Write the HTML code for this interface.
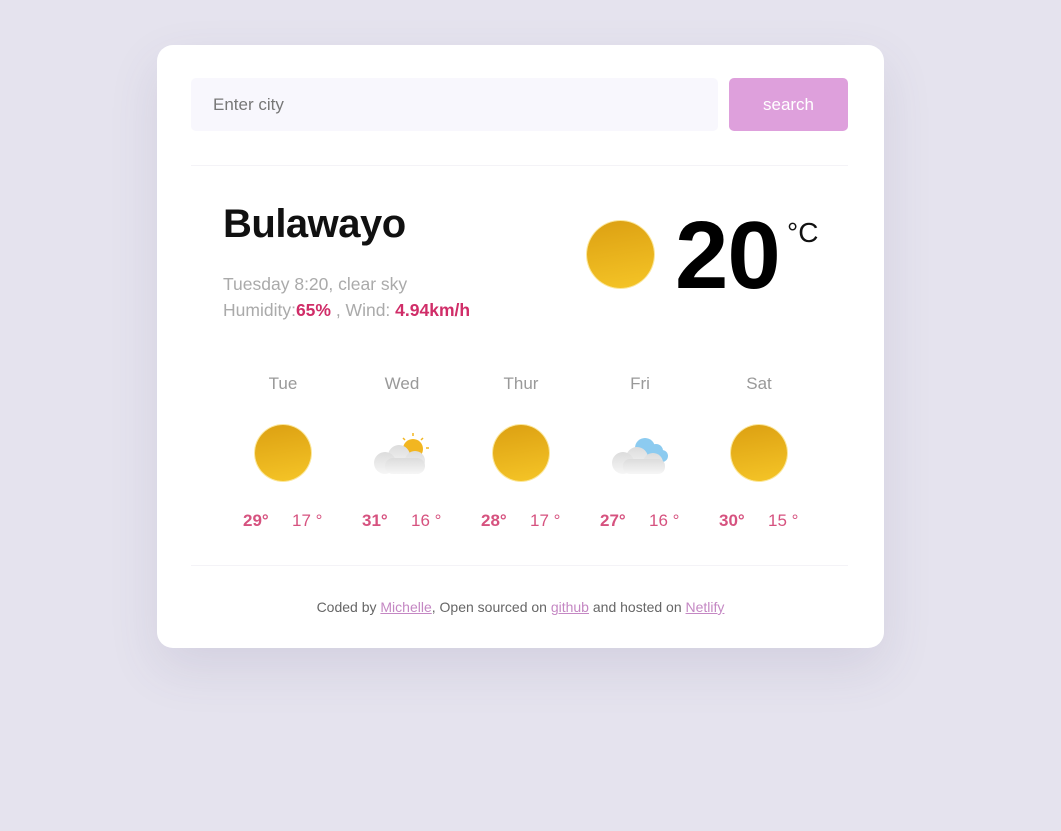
<!DOCTYPE html>
<html><head><style>
body{margin:0;background:#e5e3ee;font-family:"Liberation Sans",sans-serif;width:1061px;height:831px;position:relative;overflow:hidden}
.card{position:absolute;left:157px;top:45px;width:727px;height:603px;background:#fff;border-radius:16px;box-shadow:0 20px 50px rgba(80,70,120,.12)}
.a{position:absolute}
.inp{left:34px;top:33px;width:527px;height:53px;background:#f8f7fd;border-radius:5px;color:#777;font-size:17px;line-height:53px;box-sizing:border-box;padding-left:22px}
.btn{left:572px;top:33px;width:119px;height:53px;background:#dea0dc;border-radius:5px;color:#fff;font-size:17px;line-height:53px;text-align:center}
.hr{left:34px;width:657px;height:1px;background:#f4f3f7}
.sun{position:absolute;border-radius:50%;background:linear-gradient(170deg,#dca012,#f5c527);box-shadow:0 0 0 1px #fbe79a}
.day{position:absolute;width:120px;text-align:center;color:#999;font-size:17px}
.t{position:absolute;font-size:17px;color:#d6527f}
.pk{color:#d02d68;font-weight:bold}
a{color:#c487c3;text-decoration:underline}
</style></head><body>
<div class="card">
<div class="a inp">Enter city</div>
<div class="a btn">search</div>
<div class="a hr" style="top:120px"></div>
<div class="a" style="left:66px;top:157px;font-size:40px;font-weight:bold;color:#111;letter-spacing:-0.5px">Bulawayo</div>
<div class="a" style="left:66px;top:226px;font-size:17.5px;color:#aaa;line-height:26px">Tuesday 8:20, clear sky<br>Humidity:<span class="pk">65%</span> , Wind: <span class="pk">4.94km/h</span></div>
<div class="sun" style="left:430px;top:176px;width:67px;height:67px"></div>
<div class="a" style="left:518px;top:156px;font-size:96px;font-weight:bold;color:#000;letter-spacing:-1px">20</div>
<div class="a" style="left:630px;top:172px;font-size:28px;color:#111">°C</div>
<div class="day" style="left:66px;top:329px">Tue</div>
<div class="day" style="left:185px;top:329px">Wed</div>
<div class="day" style="left:304px;top:329px">Thur</div>
<div class="day" style="left:423px;top:329px">Fri</div>
<div class="day" style="left:542px;top:329px">Sat</div>
<div class="sun" style="left:98px;top:380px;width:56px;height:56px"></div>
<div class="sun" style="left:336px;top:380px;width:56px;height:56px"></div>
<div class="sun" style="left:574px;top:380px;width:56px;height:56px"></div>
<svg class="a" style="left:214px;top:385px" width="62" height="45" viewBox="0 0 62 45">
<defs><linearGradient id="cg" x1="0" y1="0" x2="0" y2="1"><stop offset="0" stop-color="#dcdcdc"/><stop offset="1" stop-color="#f6f6f6"/></linearGradient></defs>
<circle cx="42" cy="19" r="10" fill="#f2b621"/>
<g stroke="#f2b621" stroke-width="1.5"><line x1="42" y1="3" x2="42" y2="6"/><line x1="32" y1="8" x2="34" y2="10"/><line x1="52" y1="8" x2="50" y2="10"/><line x1="55" y1="18" x2="58" y2="18"/></g>
<g fill="url(#cg)"><circle cx="28" cy="26" r="11"/><circle cx="14" cy="33" r="11"/><circle cx="44" cy="31" r="10"/><rect x="14" y="28" width="40" height="16" rx="8"/></g>
</svg>
<svg class="a" style="left:452px;top:385px" width="62" height="45" viewBox="0 0 62 45">
<defs><linearGradient id="cg2" x1="0" y1="0" x2="0" y2="1"><stop offset="0" stop-color="#dcdcdc"/><stop offset="1" stop-color="#f6f6f6"/></linearGradient></defs>
<g fill="#8ccbf0"><circle cx="36" cy="18" r="10"/><circle cx="47" cy="21" r="7"/><circle cx="53" cy="26" r="6"/></g>
<g fill="url(#cg2)"><circle cx="28" cy="28" r="11"/><circle cx="14" cy="33" r="11"/><circle cx="44" cy="33" r="10"/><rect x="14" y="29" width="42" height="15" rx="7"/></g>
</svg>
<div class="t" style="left:86px;top:466px;font-weight:bold">29°</div><div class="t" style="left:135px;top:466px">17 °</div>
<div class="t" style="left:205px;top:466px;font-weight:bold">31°</div><div class="t" style="left:254px;top:466px">16 °</div>
<div class="t" style="left:324px;top:466px;font-weight:bold">28°</div><div class="t" style="left:373px;top:466px">17 °</div>
<div class="t" style="left:443px;top:466px;font-weight:bold">27°</div><div class="t" style="left:492px;top:466px">16 °</div>
<div class="t" style="left:562px;top:466px;font-weight:bold">30°</div><div class="t" style="left:611px;top:466px">15 °</div>
<div class="a hr" style="top:520px"></div>
<div class="a" style="left:0;width:727px;top:554px;text-align:center;font-size:14px;color:#666">Coded by <a>Michelle</a>, Open sourced on <a>github</a> and hosted on <a>Netlify</a></div>
</div>
</body></html>
